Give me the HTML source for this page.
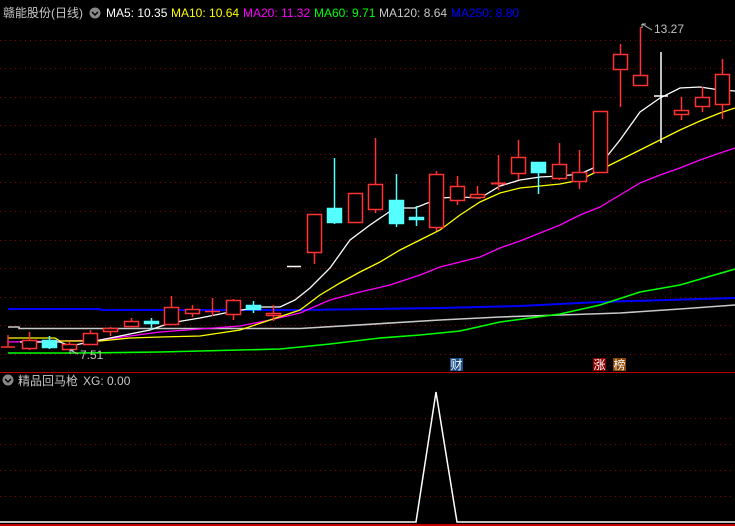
<!DOCTYPE html>
<html><head><meta charset="utf-8"><style>
html,body{margin:0;padding:0;background:#000;width:735px;height:526px;overflow:hidden}
svg{display:block}
text{font-family:"Liberation Sans","Noto Sans CJK SC",sans-serif;font-size:12px}
</style></head><body>
<svg width="735" height="526" viewBox="0 0 735 526" xmlns="http://www.w3.org/2000/svg">
<rect width="735" height="526" fill="#000"/>
<g stroke="#8b0000" stroke-width="1" stroke-dasharray="1,4">
<line x1="0" y1="40.5" x2="735" y2="40.5"/><line x1="0" y1="68.5" x2="735" y2="68.5"/>
<line x1="0" y1="97.5" x2="735" y2="97.5"/><line x1="0" y1="125.5" x2="735" y2="125.5"/>
<line x1="0" y1="154.5" x2="735" y2="154.5"/><line x1="0" y1="182.5" x2="735" y2="182.5"/>
<line x1="0" y1="211.5" x2="735" y2="211.5"/><line x1="0" y1="240.5" x2="735" y2="240.5"/>
<line x1="0" y1="268.5" x2="735" y2="268.5"/><line x1="0" y1="297.5" x2="735" y2="297.5"/>
<line x1="0" y1="325.5" x2="735" y2="325.5"/><line x1="0" y1="354.5" x2="735" y2="354.5"/>
<line x1="0" y1="418.5" x2="735" y2="418.5"/><line x1="0" y1="444.5" x2="735" y2="444.5"/>
<line x1="0" y1="470.5" x2="735" y2="470.5"/><line x1="0" y1="496.5" x2="735" y2="496.5"/>
</g>
<line x1="0" y1="372.5" x2="735" y2="372.5" stroke="#c00000"/>
<line x1="0" y1="525" x2="735" y2="525" stroke="#c00000" stroke-width="2"/>
<!-- MAs -->
<g fill="none" stroke-width="1.3">
<polyline stroke="#0000ff" stroke-width="2" points="8,309 100,309 101,310 300,310 440,308 520,306 600,302 700,299 735,298"/>
<polyline stroke="#c8c8c8" stroke-width="1.6" points="8,327 19,327 19,328.5 300,328.5 440,320 500,317 560,315 620,313 680,309 735,305"/>
<polyline stroke="#00ff00" stroke-width="1.6" points="8,353 80,353 160,352 240,350 280,349 330,344 380,338 420,335 460,331 500,322 560,314 600,305 640,292 680,285 735,269"/>
<polyline stroke="#ff00ff" points="8,342 60,341 100,340 160,332 200,329 240,326 270,320 300,313 330,300 360,292 390,285 420,275 440,267 460,262 480,257 500,248 520,241 540,233 560,225 580,215 600,207 620,195 640,183 660,175 680,168 700,160 720,153 735,148"/>
<polyline stroke="#ffff00" points="8,338 55,338 60,341 100,341 130,338 160,337 200,336 240,330 270,320 300,310 320,295 340,283 360,272 380,262 400,250 420,240 440,230 460,215 480,202 500,193 520,188 540,186 560,184 580,180 600,170 620,160 640,150 660,140 680,130 700,121 720,113 735,108"/>
<polyline stroke="#ffffff" points="20,342 60,342 70,346 85,343 110,338 150,330 170,323 200,318 230,312 260,307 280,307 295,300 310,288 330,268 350,240 370,225 395,208 415,208 440,198 460,197 480,198 500,186 520,180 540,177 560,176 580,174 600,165 620,140 640,112 660,98 680,88 700,87 720,90 735,91"/>
</g>
<!-- candles -->
<g stroke="#ff3333" stroke-width="1.5" fill="#000">
<line x1="8" y1="335" x2="8" y2="347"/><line x1="1" y1="347" x2="15" y2="347"/>
<line x1="29.5" y1="332" x2="29.5" y2="350"/><rect x="22.5" y="340.5" width="14" height="8"/>
<line x1="69.5" y1="342" x2="69.5" y2="350"/><rect x="62.5" y="344.5" width="14" height="5"/>
<line x1="90.5" y1="330" x2="90.5" y2="344"/><rect x="83.5" y="333.5" width="14" height="11"/>
<line x1="110.5" y1="327" x2="110.5" y2="336"/><rect x="103.5" y="328.5" width="14" height="3"/>
<line x1="131.5" y1="318" x2="131.5" y2="326"/><rect x="124.5" y="321.5" width="14" height="5"/>
<line x1="171.5" y1="296" x2="171.5" y2="324"/><rect x="164.5" y="307.5" width="14" height="17"/>
<line x1="192.5" y1="305" x2="192.5" y2="317"/><rect x="185.5" y="309.5" width="14" height="4"/>
<line x1="212.5" y1="298" x2="212.5" y2="316"/><line x1="205" y1="311.5" x2="220" y2="311.5"/>
<line x1="233.5" y1="299" x2="233.5" y2="320"/><rect x="226.5" y="300.5" width="14" height="14"/>
<line x1="273.5" y1="305" x2="273.5" y2="321"/><rect x="266.5" y="313.5" width="14" height="2"/>
<line x1="314.5" y1="252" x2="314.5" y2="264"/><rect x="307.5" y="214.5" width="14" height="38"/>
<rect x="348.5" y="193.5" width="14" height="29"/>
<line x1="375.5" y1="138" x2="375.5" y2="213"/><rect x="368.5" y="184.5" width="14" height="25"/>
<line x1="436.5" y1="171" x2="436.5" y2="231"/><rect x="429.5" y="174.5" width="14" height="53"/>
<line x1="457.5" y1="176" x2="457.5" y2="205"/><rect x="450.5" y="186.5" width="14" height="14"/>
<line x1="477.5" y1="186" x2="477.5" y2="197"/><rect x="470.5" y="194.5" width="14" height="3"/>
<line x1="498.5" y1="155" x2="498.5" y2="190"/><line x1="491" y1="183.5" x2="506" y2="183.5" stroke-width="2"/>
<line x1="518.5" y1="140" x2="518.5" y2="180"/><rect x="511.5" y="157.5" width="14" height="16"/>
<line x1="559.5" y1="143" x2="559.5" y2="180"/><rect x="552.5" y="164.5" width="14" height="14"/>
<line x1="579.5" y1="150" x2="579.5" y2="189"/><rect x="572.5" y="172.5" width="14" height="9"/>
<rect x="593.5" y="111.5" width="14" height="61"/>
<line x1="620.5" y1="44" x2="620.5" y2="107"/><rect x="613.5" y="54.5" width="14" height="15"/>
<line x1="640.5" y1="27" x2="640.5" y2="75"/><rect x="633.5" y="75.5" width="14" height="10"/>
<line x1="681.5" y1="97" x2="681.5" y2="120"/><rect x="674.5" y="110.5" width="14" height="4"/>
<line x1="702.5" y1="87" x2="702.5" y2="112"/><rect x="695.5" y="97.5" width="14" height="9"/>
<line x1="722.5" y1="59" x2="722.5" y2="119"/><rect x="715.5" y="74.5" width="14" height="30"/>
</g>
<g stroke="#55ffff" stroke-width="1.5" fill="#55ffff">
<line x1="49.5" y1="336" x2="49.5" y2="349"/><rect x="42.5" y="340.5" width="14" height="7"/>
<line x1="151.5" y1="318" x2="151.5" y2="330"/><rect x="144.5" y="321.5" width="14" height="2"/>
<line x1="253.5" y1="301" x2="253.5" y2="313"/><rect x="246.5" y="305.5" width="14" height="4"/>
<line x1="334.5" y1="158" x2="334.5" y2="224"/><rect x="327.5" y="208.5" width="14" height="14"/>
<line x1="396.5" y1="174" x2="396.5" y2="227"/><rect x="389.5" y="200.5" width="14" height="23"/>
<line x1="416.5" y1="206" x2="416.5" y2="226"/><rect x="409.5" y="217.5" width="14" height="2"/>
<line x1="538.5" y1="162" x2="538.5" y2="194"/><rect x="531.5" y="162.5" width="14" height="10"/>
</g>
<g stroke="#fff" stroke-width="1.5">
<line x1="287" y1="266.5" x2="301" y2="266.5"/>
<line x1="661" y1="52" x2="661" y2="143"/><line x1="654" y1="96" x2="668" y2="96"/>
</g>
<!-- labels -->
<text x="654" y="33" fill="#c0c0c0" font-size="12">13.27</text>
<path d="M642 24 L642 28 M642 24 L646 24 M642 24 L652 30" stroke="#c0c0c0" fill="none"/>
<text x="80" y="359" fill="#c0c0c0" font-size="12">7.51</text>
<path d="M70 350 L70 354 M70 350 L74 350 M70 350 L78 354" stroke="#c0c0c0" fill="none"/>
<!-- header -->
<text x="3" y="17" fill="#c8c8c8" font-size="13">赣能股份(日线)</text>
<circle cx="95" cy="13" r="5.5" fill="#888"/><path d="M92 12 L95 15 L98 12" stroke="#000" stroke-width="1.5" fill="none"/>
<text x="106" y="17" fill="#ffffff" font-size="12.5">MA5: 10.35</text>
<text x="171" y="17" fill="#ffff00" font-size="12.5">MA10: 10.64</text>
<text x="243" y="17" fill="#ff00ff" font-size="12.5">MA20: 11.32</text>
<text x="314" y="17" fill="#00ff00" font-size="12.5">MA60: 9.71</text>
<text x="379" y="17" fill="#c8c8c8" font-size="12.5">MA120: 8.64</text>
<text x="451" y="17" fill="#0000ff" font-size="12.5">MA250: 8.80</text>
<text x="18" y="385" fill="#c8c8c8" font-size="13">精品回马枪</text>
<text x="83" y="385" fill="#c8c8c8" font-size="12.5">XG: 0.00</text>
<circle cx="8" cy="380" r="5.5" fill="#888"/><path d="M5 379 L8 382 L11 379" stroke="#000" stroke-width="1.5" fill="none"/>
<!-- badges -->
<rect x="450" y="358" width="13" height="13" fill="#1a4f8a"/><text x="450.5" y="369" fill="#fff" font-size="12">财</text>
<rect x="593" y="358" width="13" height="13" fill="#8b0000"/><text x="593.5" y="369" fill="#fff" font-size="12">涨</text>
<rect x="613" y="358" width="13" height="13" fill="#8b4500"/><text x="613.5" y="369" fill="#fff" font-size="12">榜</text>
<!-- XG -->
<polyline points="0,522 416,522 436,392 457,522 735,522" fill="none" stroke="#fff" stroke-width="1.5"/>
</svg>
</body></html>
